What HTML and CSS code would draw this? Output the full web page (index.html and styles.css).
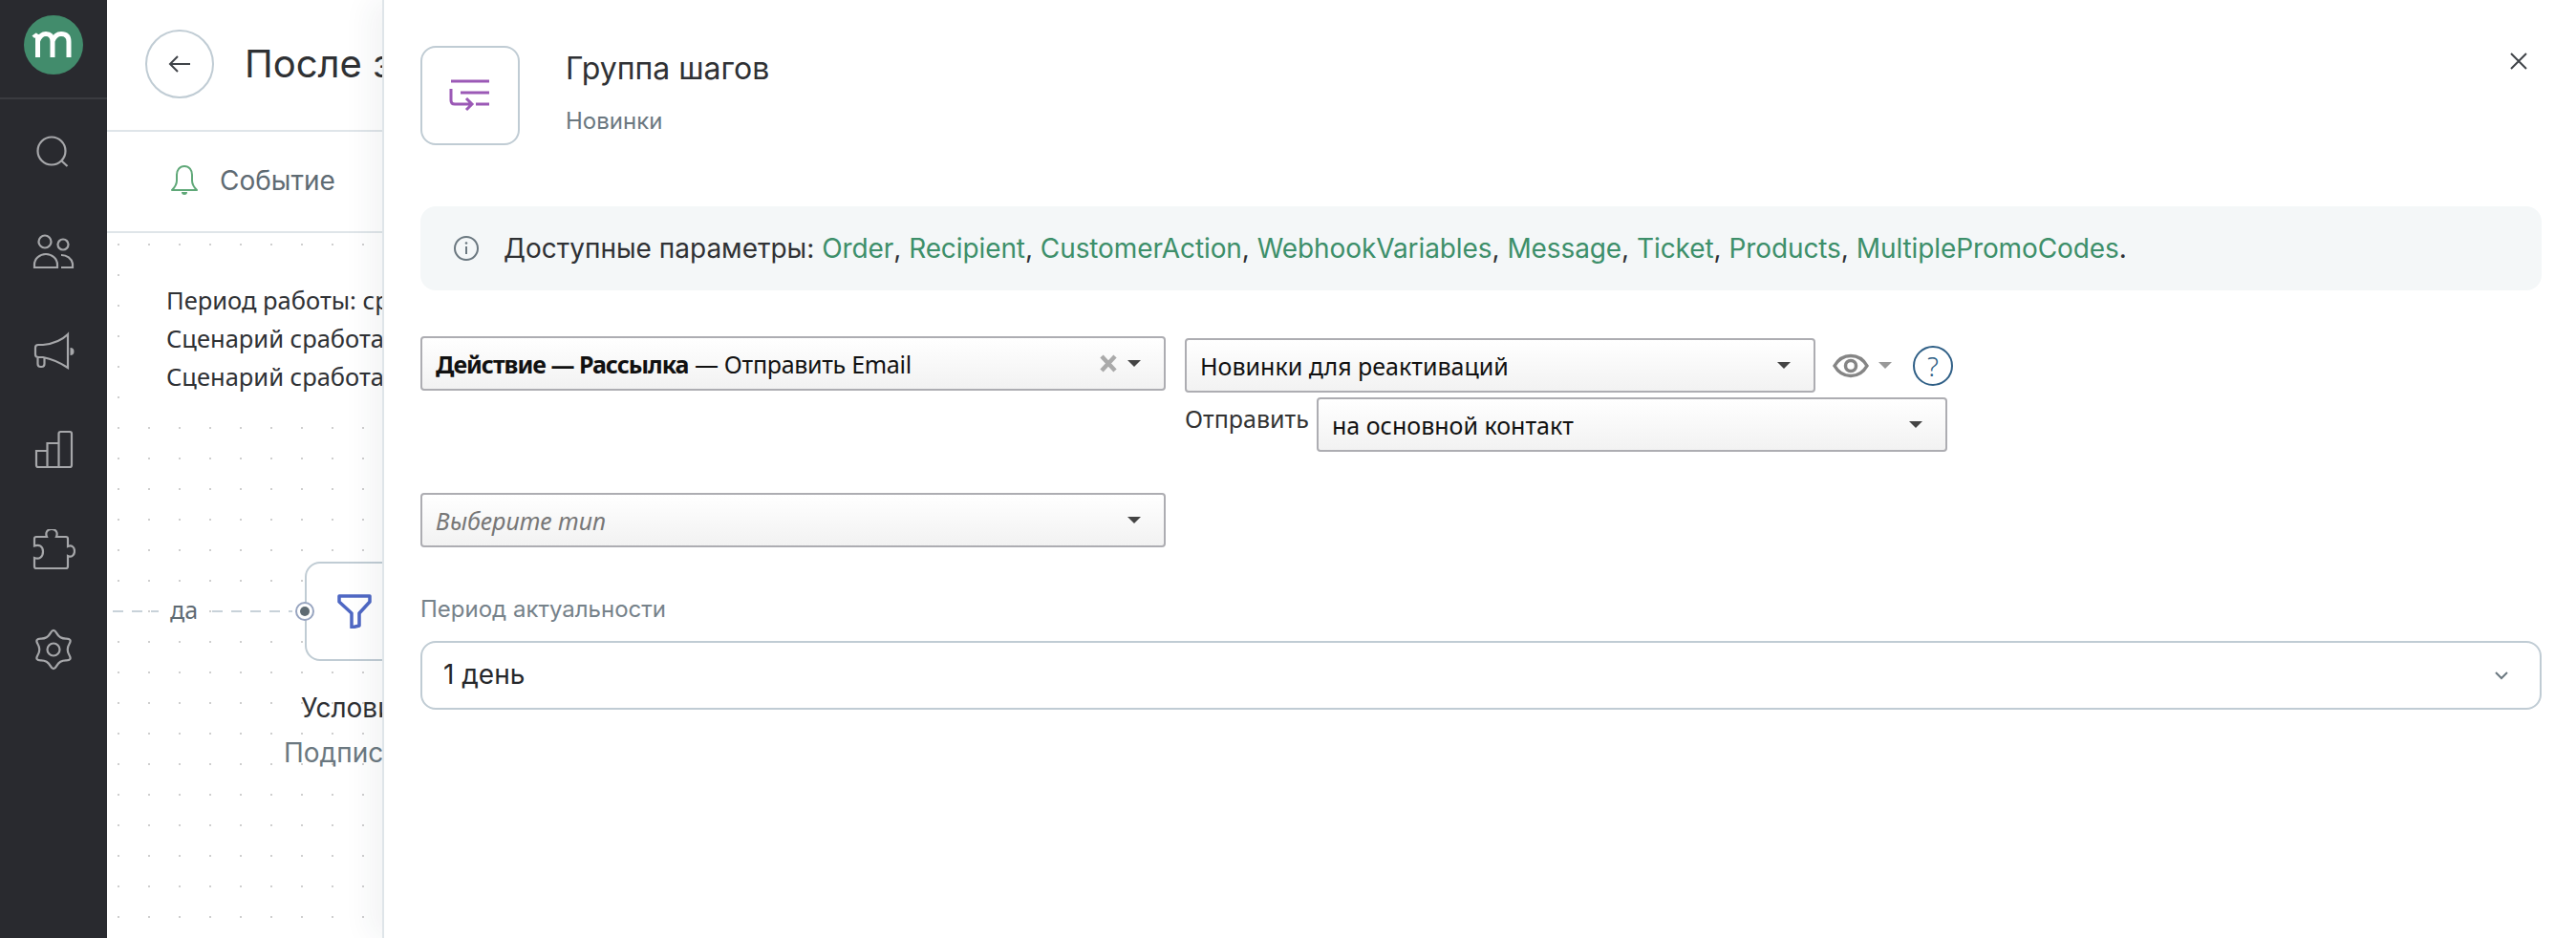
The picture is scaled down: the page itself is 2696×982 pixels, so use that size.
FILE: index.html
```html
<!DOCTYPE html>
<html lang="ru">
<head>
<meta charset="utf-8">
<title>Группа шагов</title>
<link rel="stylesheet" href="styles.css">
</head>
<body>
<div class="app">
  <nav class="sidebar">
    <div class="logo-wrap">
      <svg class="logo" width="62" height="62" viewBox="0 0 62 62"><circle cx="31" cy="31" r="31" fill="#428c6c"/><path d="M10.500 20c1.500 2 3 2 4.500 0M14.500 44V20M14.500 27c2-5 5-7.500 8.500-7.500 5 0 7 3 7 8V44M30 27c2-5 5-7.500 9-7.500 5.500 0 8 3 8 8V44" fill="none" stroke="#fff" stroke-width="5"/></svg>
    </div>
    <ul class="nav-list">
      <li class="nav-item"><svg width="44" height="44" viewBox="34 136 44 44"><circle cx="54" cy="158" r="14.500"/><path d="M64 168l6.500 6"/></svg></li>
      <li class="nav-item"><svg width="44" height="44" viewBox="34 242 44 44"><circle cx="47" cy="254" r="6.500"/><circle cx="66" cy="257" r="5.500"/><path d="M36 281v-3a12 11 0 0 1 24 0v3zM64 268a12 11 0 0 1 12 9v4H64"/></svg></li>
      <li class="nav-item"><svg width="44" height="44" viewBox="34 345 44 44"><path d="M71 350v35c-6-4-16-9-26-11h-5a3 3 0 0 1-3-3v-7a3 3 0 0 1 3-3h5c10-1 20-5 26-11zM39.500 375v6a3 3 0 0 0 3 3h1a3 3 0 0 0 3-3v-6"/><path class="solid" d="M73.500 364a4 4 0 0 1 0 8z"/></svg></li>
      <li class="nav-item"><svg width="44" height="44" viewBox="34 450 44 44"><path d="M38 473h11.500v17H40a2 2 0 0 1-2-2zM49.500 490v-25h12v25M61.500 490v-35a2 2 0 0 1 2-2H73a2 2 0 0 1 2 2v33a2 2 0 0 1-2 2H49.500"/></svg></li>
      <li class="nav-item"><svg width="46" height="44" viewBox="34 554 46 44"><path d="M39 562h11c-2-5 1-8 5-8s7 3 5 8h10a2 2 0 0 1 2 2v8c4-2 7 1 7 5s-3 7-7 5v11a2 2 0 0 1-2 2H39a2 2 0 0 1-2-2v-9c5 2 9-1 9-6.500s-4-8-9-6V564a2 2 0 0 1 2-2z"/></svg></li>
      <li class="nav-item"><svg width="44" height="44" viewBox="-22 -22 44 44"><path d="M-3.250 -17.130Q0 -23 3.250 -17.130T13.210 -11.380T16.460 -5.750T16.460 5.750T13.210 11.380T3.250 17.130T-3.250 17.130T-13.210 11.380T-16.460 5.750T-16.460 -5.750T-13.210 -11.380T-3.250 -17.130Z"/><circle r="6.500"/></svg></li>
    </ul>
  </nav>

  <main class="main">
    <header class="top">
      <button class="back"><svg width="24" height="20" viewBox="0 0 24 20"><path d="M23 10H2M10 2l-8 8 8 8" fill="none" stroke="#3f4348" stroke-width="2"/></svg></button>
      <h1 class="page-title">После завер</h1>
    </header>
    <div class="tabs">
      <div class="tab">
        <svg width="30" height="34" viewBox="0 0 30 34"><path d="M2 27c3-3 5-6 5-10v-6c0-5 3-9 8-9s8 4 8 9v6c0 4 2 7 5 10z" fill="none" stroke="#5fa878" stroke-width="2" stroke-linejoin="round"/><path d="M12 29h6c0 2-1 3-3 3s-3-1-3-3z" fill="#5fa878"/></svg>
        <span>Событие</span>
      </div>
    </div>
    <div class="canvas">
      <div class="note">
        <p>Период работы: среда</p>
        <p>Сценарий сработает</p>
        <p>Сценарий сработает</p>
      </div>
      <div class="edge edge-a"></div>
      <div class="edge-label">да</div>
      <div class="edge edge-b"></div>
      <div class="node">
        <svg class="funnel" width="36" height="36" viewBox="0 0 36 36"><path d="M2 2h32v6L23 20v13l-8 2V20L2 8z" fill="none" stroke="#4f68c4" stroke-width="3.500" stroke-linejoin="round"/></svg>
      </div>
      <div class="port"></div>
      <div class="node-title">Условие</div>
      <div class="node-sub">Подписка на</div>
    </div>
  </main>

  <aside class="panel">
    <header class="panel-head">
      <div class="panel-icon">
        <svg width="44" height="36" viewBox="0 0 44 36"><path d="M2 3h40M12 15h30M28 27h14M2 11v12q0 4 4 4h18M18 21l6 6-6 6" fill="none" stroke="#9b59b6" stroke-width="3"/></svg>
      </div>
      <div class="panel-text">
        <div class="panel-title">Группа шагов</div>
        <div class="panel-sub">Новинки</div>
      </div>
      <button class="close"><svg width="18" height="18" viewBox="0 0 18 18"><path d="M1 1l16 16M17 1L1 17" stroke="#3f4348" stroke-width="2"/></svg></button>
    </header>

    <div class="info">
      <svg width="26" height="26" viewBox="0 0 26 26"><circle cx="13" cy="13" r="12" fill="none" stroke="#6b7880" stroke-width="2"/><path d="M13 11v8" stroke="#6b7880" stroke-width="2"/><circle cx="13" cy="7.500" r="1.300" fill="#6b7880"/></svg>
      <p>Доступные параметры: <a>Order</a>, <a>Recipient</a>, <a>CustomerAction</a>, <a>WebhookVariables</a>, <a>Message</a>, <a>Ticket</a>, <a>Products</a>, <a>MultiplePromoCodes</a>.</p>
    </div>

    <div class="form-row">
      <div class="form-left">
        <div class="sel sel-wide"><span class="sel-text"><b>Действие — Рассылка</b> <span class="tail">— Отправить Email</span></span><svg class="clear" width="18" height="19" viewBox="0 0 18 19"><path d="M2 2l14 15M16 2L2 17" stroke="#aaa" stroke-width="4.500"/></svg><i class="tri"></i></div>
      </div>
      <div class="form-right">
        <div class="line">
          <div class="sel sel-list"><span class="sel-text">Новинки для реактиваций</span><i class="tri"></i></div>
          <svg class="eye" width="38" height="26" viewBox="0 0 38 26"><path d="M2 13C6 6 12 2.500 19 2.500S32 6 36 13c-4 7-10 10.500-17 10.500S6 20 2 13z" fill="none" stroke="#858585" stroke-width="3.500"/><circle cx="19" cy="13" r="5.500" fill="none" stroke="#858585" stroke-width="3.500"/></svg>
          <i class="tri tri-gray"></i>
          <span class="help">?</span>
        </div>
        <div class="line line-send">
          <span class="send-label">Отправить</span>
          <div class="sel sel-list"><span class="sel-text">на основной контакт</span><i class="tri"></i></div>
        </div>
      </div>
    </div>

    <div class="sel sel-wide sel-type"><span class="sel-text placeholder">Выберите тип</span><i class="tri"></i></div>

    <label class="field-label">Период актуальности</label>
    <div class="period"><span>1 день</span>
      <svg width="14" height="9" viewBox="0 0 14 9"><path d="M1 1l6 6 6-6" fill="none" stroke="#6b7880" stroke-width="2"/></svg>
    </div>
  </aside>
</div>
</body>
</html>
```

FILE: styles.css
```css
* { box-sizing: border-box; }
html, body { margin: 0; height: 100%; overflow: hidden; background: #fff; }
body { font-family: Inter, "Noto Sans", sans-serif; color: #2f3134; }
p, h1, ul { margin: 0; padding: 0; }
button { border: 0; background: none; padding: 0; font: inherit; }

.app { position: relative; display: flex; width: 2696px; height: 982px; overflow: hidden; }

.sidebar { flex: none; width: 112px; background: #292a2f; }
.logo-wrap { height: 104px; padding: 16px 0 0 25px; border-bottom: 2px solid #3a3b40; }
.logo { display: block; }
.nav-list { list-style: none; padding-top: 2px; }
.nav-item { height: 104.400px; display: flex; align-items: center; justify-content: center; }
.nav-item svg { fill: none; stroke: #a6a7aa; stroke-width: 2.200; }
.nav-item .solid { fill: #a6a7aa; stroke: none; }

.main { flex: 1; min-width: 0; display: flex; flex-direction: column; }
.top { flex: none; height: 138px; display: flex; align-items: center; gap: 32px; padding: 0 0 2px 40px; border-bottom: 2px solid #dfe5e9; }
.back { width: 72px; height: 72px; border: 2px solid #c0ccd4; border-radius: 50%; display: flex; align-items: center; justify-content: center; }
.page-title { font-size: 40px; font-weight: 400; line-height: 48px; white-space: nowrap; color: #2f3134; }
.tabs { flex: none; height: 106px; padding: 0 0 2px 66px; border-bottom: 2px solid #dfe5e9; display: flex; align-items: center; }
.tab { display: flex; align-items: center; gap: 22px; font-size: 28px; color: #5f6b73; }
.canvas { flex: 1; position: relative; background-image: radial-gradient(circle, #cfcfcf 1px, transparent 1.300px); background-size: 32px 32px; background-position: -4px -4px; }

.note { position: absolute; left: 41px; top: 40px; width: 300px; padding: 10px 0 12px 21px; background: #fff; font-family: "Noto Sans", sans-serif; font-size: 25.500px; line-height: 40px; color: #2f3134; white-space: nowrap; }
.edge { position: absolute; top: 395px; height: 2px; background: repeating-linear-gradient(90deg, #c8d2d9 0 11px, transparent 11px 20px); }
.edge-a { left: 6px; width: 48px; }
.edge-b { left: 110px; width: 84px; }
.edge-label { position: absolute; left: 66px; top: 374px; font-family: "Noto Sans", sans-serif; font-size: 25px; line-height: 40px; color: #5f6b73; }
.node { position: absolute; left: 207px; top: 344px; width: 104px; height: 104px; background: #fff; border: 2px solid #c0ccd4; border-radius: 16px; display: flex; align-items: center; justify-content: center; }
.port { position: absolute; left: 197px; top: 386px; width: 20px; height: 20px; border-radius: 50%; background: #fff; border: 2px solid #98a5c0; }
.port::after { content: ""; display: block; width: 10px; height: 10px; margin: 3px; border-radius: 50%; background: #5f6b73; }
.node-title { position: absolute; left: 203px; top: 480px; font-size: 28px; line-height: 34px; white-space: nowrap; color: #2f3134; }
.node-sub { position: absolute; left: 185px; top: 527px; font-size: 28px; line-height: 34px; white-space: nowrap; color: #6b7880; }

.panel { position: absolute; left: 400px; top: 0; right: 0; bottom: 0; background: #fff; border-left: 2px solid #dfe5e9; box-shadow: -12px 0 30px rgba(40, 50, 60, .06); padding: 48px 36px 0 38px; }
.panel-head { display: flex; align-items: flex-start; gap: 48px; height: 104px; position: relative; }
.panel-icon { flex: none; width: 104px; height: 104px; border: 2px solid #c0ccd4; border-radius: 16px; display: flex; align-items: center; justify-content: center; }
.panel-text { padding-top: 5px; }
.panel-title { font-size: 32px; line-height: 38px; color: #2f3134; }
.panel-sub { margin-top: 21px; font-size: 24px; line-height: 30px; color: #6b7880; }
.close { position: absolute; right: 15px; top: 7px; width: 18px; height: 18px; }
.close svg { display: block; }

.info { margin-top: 64px; height: 88px; background: #f4f7f8; border-radius: 16px; display: flex; align-items: center; gap: 26px; padding-left: 35px; font-size: 28px; color: #2f3134; }
.info svg { flex: none; }
.info a { color: #3d8f6a; letter-spacing: -0.100px; }

.form-row { margin-top: 48px; display: flex; gap: 20px; align-items: flex-start; }
.form-left { flex: none; width: 780px; }
.form-right { padding-top: 2px; }
.line { display: flex; align-items: center; }
.sel { height: 57px; border: 2px solid #adadb2; border-radius: 4px; background: linear-gradient(#fff, #f2f2f2); display: flex; align-items: center; font-family: "Noto Sans", sans-serif; font-size: 25px; color: #111; padding: 0 24px 0 14px; }
.sel-text { flex: 1; white-space: nowrap; }
.sel b { letter-spacing: -1px; }
.tail { letter-spacing: -0.300px; }
.sel-wide { width: 780px; }
.sel-list { width: 660px; }
.tri { flex: none; width: 0; height: 0; border-left: 7px solid transparent; border-right: 7px solid transparent; border-top: 7px solid #444; }
.clear { flex: none; margin-right: 11px; }
.eye { flex: none; margin-left: 18px; }
.tri-gray { margin-left: 10px; border-top-color: #999; }
.help { flex: none; margin-left: 22px; width: 42px; height: 42px; border: 2px solid #2f5f86; border-radius: 50%; display: flex; align-items: center; justify-content: center; font-family: "Noto Sans", sans-serif; font-size: 28px; font-weight: 300; color: #2f5f86; }
.line-send { margin-top: 5px; align-items: flex-start; gap: 10px; }
.send-label { font-family: "Noto Sans", sans-serif; font-size: 25px; line-height: 44px; color: #333; width: 128px; }
.sel-type { margin-top: 43px; }
.placeholder { font-style: italic; color: #777; }

.field-label { display: block; margin-top: 50px; font-size: 24px; line-height: 30px; color: #76828a; }
.period { margin-top: 18px; height: 72px; border: 2px solid #c0ccd4; border-radius: 16px; display: flex; align-items: center; justify-content: space-between; padding: 0 33px 3px 22px; font-size: 28px; color: #26282b; }
.period svg { margin-top: 3px; }
```
